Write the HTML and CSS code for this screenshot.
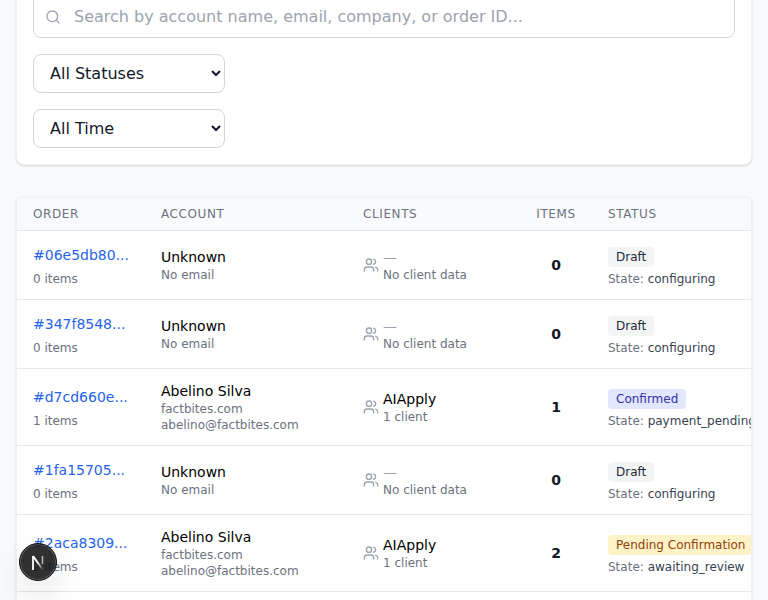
FILE: index.html
```html
<!DOCTYPE html>
<html>
    <head>
        <title>Orders</title>
        <link rel="stylesheet" href="styles.css">
    </head>
    <body>
        <main class="page">
            <section class="card filters">
                <div class="search">
                    <svg class="search-icon" viewBox="0 0 24 24" fill="none" stroke="currentColor" stroke-width="2" stroke-linecap="round" stroke-linejoin="round">
                        <circle cx="11" cy="11" r="8"></circle>
                        <path d="m21 21-4.3-4.3"></path>
                    </svg>
                    <input type="text" class="search-input" placeholder="Search by account name, email, company, or order ID...">
                </div>
                <select class="filter-select">
                    <option>All Statuses</option>
                </select>
                <select class="filter-select">
                    <option>All Time</option>
                </select>
            </section>

            <section class="card orders">
                <table class="orders-table">
                    <colgroup>
                        <col class="col-order">
                        <col class="col-account">
                        <col class="col-clients">
                        <col class="col-items">
                        <col class="col-status">
                    </colgroup>
                    <thead>
                        <tr>
                            <th>Order</th>
                            <th>Account</th>
                            <th>Clients</th>
                            <th class="center">Items</th>
                            <th>Status</th>
                        </tr>
                    </thead>
                    <tbody>
                        <tr>
                            <td><a class="order-id">#06e5db80...</a><div class="order-count">0 items</div></td>
                            <td><div class="name">Unknown</div><div class="sub">No email</div></td>
                            <td>
                                <div class="client">
                                    <svg class="users-icon" viewBox="0 0 24 24" fill="none" stroke="currentColor" stroke-width="2" stroke-linecap="round" stroke-linejoin="round"><path d="M16 21v-2a4 4 0 0 0-4-4H6a4 4 0 0 0-4 4v2"></path><circle cx="9" cy="7" r="4"></circle><path d="M22 21v-2a4 4 0 0 0-3-3.87"></path><path d="M16 3.13a4 4 0 0 1 0 7.75"></path></svg>
                                    <div><div class="name muted">—</div><div class="sub">No client data</div></div>
                                </div>
                            </td>
                            <td class="center count">0</td>
                            <td><div class="badge-line"><span class="badge draft">Draft</span></div><div class="state">State: <span>configuring</span></div></td>
                        </tr>
                        <tr>
                            <td><a class="order-id">#347f8548...</a><div class="order-count">0 items</div></td>
                            <td><div class="name">Unknown</div><div class="sub">No email</div></td>
                            <td>
                                <div class="client">
                                    <svg class="users-icon" viewBox="0 0 24 24" fill="none" stroke="currentColor" stroke-width="2" stroke-linecap="round" stroke-linejoin="round"><path d="M16 21v-2a4 4 0 0 0-4-4H6a4 4 0 0 0-4 4v2"></path><circle cx="9" cy="7" r="4"></circle><path d="M22 21v-2a4 4 0 0 0-3-3.87"></path><path d="M16 3.13a4 4 0 0 1 0 7.75"></path></svg>
                                    <div><div class="name muted">—</div><div class="sub">No client data</div></div>
                                </div>
                            </td>
                            <td class="center count">0</td>
                            <td><div class="badge-line"><span class="badge draft">Draft</span></div><div class="state">State: <span>configuring</span></div></td>
                        </tr>
                        <tr>
                            <td><a class="order-id">#d7cd660e...</a><div class="order-count">1 items</div></td>
                            <td><div class="name">Abelino Silva</div><div class="sub">factbites.com</div><div class="sub">abelino@factbites.com</div></td>
                            <td>
                                <div class="client">
                                    <svg class="users-icon" viewBox="0 0 24 24" fill="none" stroke="currentColor" stroke-width="2" stroke-linecap="round" stroke-linejoin="round"><path d="M16 21v-2a4 4 0 0 0-4-4H6a4 4 0 0 0-4 4v2"></path><circle cx="9" cy="7" r="4"></circle><path d="M22 21v-2a4 4 0 0 0-3-3.87"></path><path d="M16 3.13a4 4 0 0 1 0 7.75"></path></svg>
                                    <div><div class="name">AIApply</div><div class="sub">1 client</div></div>
                                </div>
                            </td>
                            <td class="center count">1</td>
                            <td><div class="badge-line"><span class="badge confirmed">Confirmed</span></div><div class="state">State: <span>payment_pending</span></div></td>
                        </tr>
                        <tr>
                            <td><a class="order-id">#1fa15705...</a><div class="order-count">0 items</div></td>
                            <td><div class="name">Unknown</div><div class="sub">No email</div></td>
                            <td>
                                <div class="client">
                                    <svg class="users-icon" viewBox="0 0 24 24" fill="none" stroke="currentColor" stroke-width="2" stroke-linecap="round" stroke-linejoin="round"><path d="M16 21v-2a4 4 0 0 0-4-4H6a4 4 0 0 0-4 4v2"></path><circle cx="9" cy="7" r="4"></circle><path d="M22 21v-2a4 4 0 0 0-3-3.87"></path><path d="M16 3.13a4 4 0 0 1 0 7.75"></path></svg>
                                    <div><div class="name muted">—</div><div class="sub">No client data</div></div>
                                </div>
                            </td>
                            <td class="center count">0</td>
                            <td><div class="badge-line"><span class="badge draft">Draft</span></div><div class="state">State: <span>configuring</span></div></td>
                        </tr>
                        <tr>
                            <td><a class="order-id">#2aca8309...</a><div class="order-count">2 items</div></td>
                            <td><div class="name">Abelino Silva</div><div class="sub">factbites.com</div><div class="sub">abelino@factbites.com</div></td>
                            <td>
                                <div class="client">
                                    <svg class="users-icon" viewBox="0 0 24 24" fill="none" stroke="currentColor" stroke-width="2" stroke-linecap="round" stroke-linejoin="round"><path d="M16 21v-2a4 4 0 0 0-4-4H6a4 4 0 0 0-4 4v2"></path><circle cx="9" cy="7" r="4"></circle><path d="M22 21v-2a4 4 0 0 0-3-3.87"></path><path d="M16 3.13a4 4 0 0 1 0 7.75"></path></svg>
                                    <div><div class="name">AIApply</div><div class="sub">1 client</div></div>
                                </div>
                            </td>
                            <td class="center count">2</td>
                            <td><div class="badge-line"><span class="badge pending">Pending Confirmation</span></div><div class="state">State: <span>awaiting_review</span></div></td>
                        </tr>
                        <tr>
                            <td colspan="5" class="blank-row"></td>
                        </tr>
                    </tbody>
                </table>
            </section>
        </main>

        <div class="dev-badge">
            <svg viewBox="0 0 20 20" width="20" height="20" fill="none">
                <defs>
                    <linearGradient id="fade" gradientUnits="userSpaceOnUse" x1="5" y1="4" x2="15" y2="18">
                        <stop offset="0.45" stop-color="#fff"></stop>
                        <stop offset="1" stop-color="#fff" stop-opacity="0"></stop>
                    </linearGradient>
                </defs>
                <path d="M5 4v14" stroke="#fff" stroke-width="1.8"></path>
                <path d="M5 4l10 14" stroke="url(#fade)" stroke-width="2"></path>
                <path d="M14.5 4v8" stroke="#fff" stroke-width="1.5" opacity="0.65"></path>
            </svg>
        </div>
    </body>
</html>
```

FILE: styles.css
```css
* {
    box-sizing: border-box;
}
html, body {
    height: 100%;
}
body {
    margin: 0;
    overflow: hidden;
    background-color: #f9fafb;
    color: #000;
    font-family: "DejaVu Sans", sans-serif;
}

/* page is shown scrolled down a little */
.page {
    margin-top: -23px;
    padding: 0 16px;
    display: flex;
    flex-direction: column;
    gap: 32px;
}
.card {
    background: white;
    border: 1px solid #eef0f3;
    border-radius: 8px;
    box-shadow: 0 1px 3px rgba(0, 0, 0, 0.1), 0 1px 2px rgba(0, 0, 0, 0.06);
}

.filters {
    padding: 16px;
    display: flex;
    flex-direction: column;
    align-items: flex-start;
    gap: 16px;
}
.search {
    position: relative;
    width: 100%;
}
.search-icon {
    position: absolute;
    left: 12px;
    top: 15px;
    width: 16px;
    height: 16px;
    color: #9ca3af;
}
.search-input {
    display: block;
    width: 100%;
    height: 44px;
    padding: 8px 16px 8px 40px;
    font-family: inherit;
    font-size: 16px;
    color: #111827;
    background: white;
    border: 1px solid #d1d5db;
    border-radius: 8px;
    outline: none;
}
.search-input::placeholder {
    color: #9ca3af;
}
.filter-select {
    display: block;
    width: 192px;
    height: 39px;
    padding: 8px 12px;
    font-family: inherit;
    font-size: 16px;
    color: #111827;
    background: white;
    border: 1px solid #d1d5db;
    border-radius: 8px;
    outline: none;
}

.orders {
    overflow: hidden;
    border-radius: 4px;
}
.orders-table {
    width: 875px;
    table-layout: fixed;
    border-collapse: separate;
    border-spacing: 0;
    font-size: 14px;
}
.col-order { width: 128px; }
.col-account { width: 202px; }
.col-clients { width: 173px; }
.col-items { width: 72px; }
.col-status { width: 300px; }

.orders-table th {
    padding: 8px 16px;
    font-size: 12px;
    line-height: 16px;
    font-weight: 400;
    letter-spacing: 0.6px;
    text-align: left;
    text-transform: uppercase;
    color: #6b7280;
    background-color: #f9fafb;
    border-bottom: 1px solid #e5e7eb;
}
.orders-table td {
    padding: 12px 16px;
    vertical-align: middle;
    line-height: 20px;
    border-bottom: 1px solid #e5e7eb;
}
.orders-table .center {
    text-align: center;
}
.orders-table .blank-row {
    height: 69px;
}

.order-id {
    display: block;
    line-height: 24px;
    color: #2563eb;
}
.order-count {
    margin-top: 4px;
    font-size: 12px;
    line-height: 16px;
    color: #6b7280;
}
.name.muted {
    color: #9ca3af;
}
.sub {
    font-size: 12px;
    line-height: 16px;
    color: #6b7280;
}
.client {
    display: flex;
    align-items: center;
    gap: 4px;
}
.users-icon {
    flex-shrink: 0;
    width: 16px;
    height: 16px;
    color: #9ca3af;
}
.count {
    font-weight: 700;
    color: #111827;
}

.badge-line {
    display: flex;
    align-items: flex-end;
    height: 24px;
    white-space: nowrap;
}
.badge {
    padding: 2px 8px;
    font-size: 12px;
    line-height: 16px;
    border-radius: 4px;
}
.draft {
    background-color: #f3f4f6;
    color: #1f2937;
}
.confirmed {
    background-color: #e0e7ff;
    color: #3730a3;
}
.pending {
    background-color: #fef3c7;
    color: #92400e;
}
.state {
    margin-top: 4px;
    font-size: 12px;
    line-height: 16px;
    color: #6b7280;
    white-space: nowrap;
}
.state span {
    color: #374151;
}

/* dev tools button floats over the table */
.dev-badge {
    position: fixed;
    left: 19px;
    top: 543px;
    width: 38px;
    height: 38px;
    display: flex;
    align-items: center;
    justify-content: center;
    border-radius: 50%;
    background: rgba(25, 25, 25, 0.9);
    border: 1px solid #111;
    box-shadow: inset 0 0 0 1px rgba(255, 255, 255, 0.2), 0 16px 32px rgba(0, 0, 0, 0.1);
}
```
